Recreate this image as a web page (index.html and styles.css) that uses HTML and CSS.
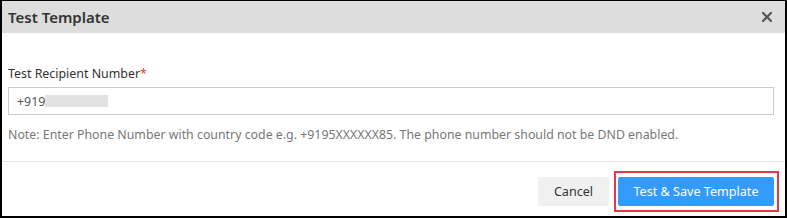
FILE: index.html
```html
<!DOCTYPE html>
<html lang="en">
<head>
  <meta charset="UTF-8">
  <meta name="viewport" content="width=device-width, initial-scale=1.0">
  <title>Test Template</title>
  <link rel="stylesheet" href="styles.css">
</head>
<body>
  <div class="modal">
    <div class="modal-header">
      <h4 class="modal-title">Test Template</h4>
      <span class="close">
        <svg width="10" height="10" viewBox="0 0 10 10">
          <path d="M1 1 L9 9 M9 1 L1 9" stroke="#555" stroke-width="2.2" stroke-linecap="square"/>
        </svg>
      </span>
    </div>
    <div class="modal-body">
      <label class="field-label" for="recipient">Test Recipient Number<span class="req">*</span></label>
      <div class="input-box" id="recipient">
        <span class="prefix">+919</span>
        <span class="masked"></span>
      </div>
      <p class="note">Note: Enter Phone Number with country code e.g. +9195XXXXXX85. The phone number should not be DND enabled.</p>
    </div>
    <div class="modal-footer">
      <button class="btn btn-default">Cancel</button>
      <span class="highlight">
        <button class="btn btn-primary">Test &amp; Save Template</button>
      </span>
    </div>
  </div>
</body>
</html>
```

FILE: styles.css
```css
body {
  margin: 0;
  font-family: "Noto Sans", "Open Sans", sans-serif;
  color: #333;
}
.modal {
  width: 787px;
  height: 218px;
  box-sizing: border-box;
  border: 2px solid #000;
  border-top-width: 1px;
  background: #fff;
}
.modal-header {
  display: flex;
  align-items: center;
  justify-content: space-between;
  height: 32px;
  padding: 0 13px 0 6px;
  background: #dddddd;
}
.modal-title {
  margin: 0;
  font-size: 15px;
  font-weight: 600;
  color: #333;
}
.close {
  display: flex;
  cursor: pointer;
}
.modal-body {
  padding: 32px 11px 0 6px;
}
.field-label {
  display: block;
  font-size: 12.4px;
  line-height: 18px;
  color: #333;
}
.req {
  color: #e53935;
}
.input-box {
  display: flex;
  align-items: center;
  height: 28px;
  margin-top: 4px;
  padding: 0 8px;
  border: 1px solid #cccccc;
  box-sizing: border-box;
  font-size: 12.4px;
  color: #555;
}
.masked {
  display: inline-block;
  width: 63px;
  height: 12px;
  background: #e2e2e2;
}
.note {
  margin: 11px 0 0;
  font-size: 12.35px;
  line-height: 18px;
  color: #777;
}
.modal-footer {
  display: flex;
  justify-content: flex-end;
  align-items: center;
  gap: 5px;
  margin-top: 17px;
  padding: 9px 6px 0 0;
  border-top: 1px solid #e5e5e5;
}
.highlight {
  display: inline-block;
  padding: 4px 3px 4px 2px;
  border: 2px solid #e53945;
}
.btn {
  display: block;
  height: 29px;
  border: none;
  border-radius: 2px;
  font-family: inherit;
  font-size: 12.6px;
  cursor: pointer;
}
.btn-default {
  width: 71px;
  background: #f0f0f0;
  color: #333;
}
.btn-primary {
  width: 156px;
  background: #339bfd;
  color: #fff;
}
```
